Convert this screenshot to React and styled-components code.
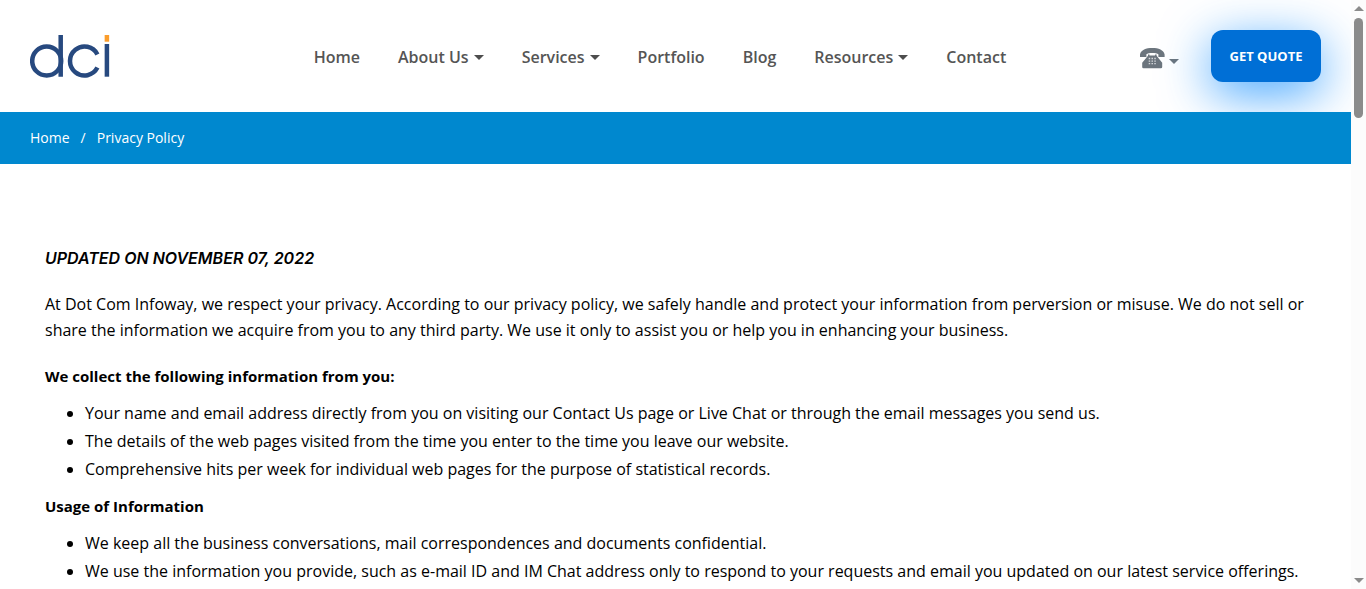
import React from 'react';
import styled, { createGlobalStyle } from 'styled-components';

const GlobalStyle = createGlobalStyle`
  *, *::before, *::after { box-sizing: border-box; }
  body {
    margin: 0;
    background: #fff;
    color: #000;
    font-family: "Open Sans", "Noto Sans", sans-serif;
    font-size: 16px;
    line-height: 26px;
  }
`;

const Page = styled.div`
  padding-right: 15px;
`;

const Header = styled.header`
  display: flex;
  align-items: center;
  justify-content: space-between;
  height: 112px;
  padding: 0 30px;
`;

const LogoLink = styled.a`
  display: block;
  svg { display: block; }
`;

const Nav = styled.nav`
  display: flex;
  align-items: center;
  gap: 38px;
  margin: 2px 0 0 70px;
`;

const NavLink = styled.a`
  display: flex;
  align-items: center;
  gap: 5px;
  color: #555;
  font-size: 16px;
  font-weight: 600;
  line-height: 24px;
  text-decoration: none;
  white-space: nowrap;
`;

const Caret = styled.span`
  border: 5px solid transparent;
  border-top-color: ${(p) => p.$color || '#4d4d4d'};
  border-bottom-width: 0;
`;

const Actions = styled.div`
  display: flex;
  align-items: center;
  gap: 32px;
`;

const PhoneButton = styled.button`
  display: flex;
  align-items: flex-end;
  gap: 4px;
  padding: 4px 0 0;
  border: 0;
  background: none;
  ${Caret} { margin-bottom: 5px; }
`;

const QuoteButton = styled.button`
  width: 110px;
  height: 52px;
  padding: 0;
  border: 0;
  border-radius: 12px;
  background: #006fd6;
  box-shadow: 0 12px 50px rgba(0, 133, 255, 0.75);
  color: #fff;
  font: 700 13px/20px "Open Sans", "Noto Sans", sans-serif;
`;

const Breadcrumb = styled.nav`
  position: relative;
  display: flex;
  align-items: center;
  gap: 11px;
  height: 52px;
  padding: 0 30px;
  background: #0088cf;
  color: #fff;
  font-size: 14px;
`;

const Crumb = styled.a`
  color: #fff;
  text-decoration: none;
`;

const Content = styled.main`
  padding: 81px 45px 0;
`;

const Updated = styled.p`
  margin: 0 0 20px;
  font-family: Inter, "Open Sans", sans-serif;
  font-style: italic;
  font-weight: 600;
`;

const Paragraph = styled.p`
  margin: 0 0 20px;
`;

const Heading = styled.h2`
  margin: 0 0 10px;
  font-size: 15px;
  font-weight: 700;
  line-height: 26px;
`;

const List = styled.ul`
  margin: 0 0 10px;
  padding-left: 40px;
  line-height: 28px;
  &:last-child { margin-bottom: 0; }
`;

const ScrollTrack = styled.div`
  position: fixed;
  top: 0;
  right: 0;
  bottom: 0;
  display: flex;
  flex-direction: column;
  align-items: center;
  width: 15px;
  padding: 6px 0;
  background: #fcfcfc;
`;

const ScrollArrow = styled.span`
  border: 5px solid transparent;
  ${(p) => (p.$up ? 'border-top-width: 0; border-bottom: 5px solid #8b8b8b;' : 'border-bottom-width: 0; border-top: 5px solid #8b8b8b; margin-top: auto;')}
`;

const ScrollThumb = styled.span`
  width: 9px;
  height: 100px;
  margin-top: 7px;
  border-radius: 5px;
  background: #8b8b8b;
`;

const navItems = [
  { label: 'Home' },
  { label: 'About Us', menu: true },
  { label: 'Services', menu: true },
  { label: 'Portfolio' },
  { label: 'Blog' },
  { label: 'Resources', menu: true },
  { label: 'Contact' },
];

const sections = [
  {
    title: 'We collect the following information from you:',
    items: [
      'Your name and email address directly from you on visiting our Contact Us page or Live Chat or through the email messages you send us.',
      'The details of the web pages visited from the time you enter to the time you leave our website.',
      'Comprehensive hits per week for individual web pages for the purpose of statistical records.',
    ],
  },
  {
    title: 'Usage of Information',
    items: [
      'We keep all the business conversations, mail correspondences and documents confidential.',
      'We use the information you provide, such as e-mail ID and IM Chat address only to respond to your requests and email you updated on our latest service offerings.',
    ],
  },
];

const Logo = () => (
  <svg width="80" height="44" viewBox="0 0 80 44" fill="none" stroke="#27497f" strokeWidth="4.5" aria-hidden="true">
    <circle cx="16.700" cy="27" r="14.500" />
    <path d="M30.700 1v41.700M67.400 20.400A14.500 14.500 0 1 0 67.400 33.600" />
    <path d="M76.900 10v32.700" />
    <path d="M76.900 1v6.700" stroke="#fb9d2b" />
  </svg>
);

const PhoneIcon = () => (
  <svg width="25" height="21" viewBox="0 0 25 21" aria-hidden="true">
    <path fill="#6c757d" d="M0 9V6.500C1 1.800 6 0 12.300 0S23.600 1.800 24.600 6.500V9h-6.200V6.300C16.500 4.500 8.200 4.500 6.400 6.300V9z" />
    <path fill="#6c757d" d="M8 6.500h1.500v1h5.600v-1h1.500v1.300l5.600 6.900V19q0 1.300-1.300 1.300H3.500Q2.200 20.300 2.200 19v-4.300L8 7.800z" />
    <path stroke="#d5d8da" strokeWidth="1.300" strokeDasharray="1.500 1.300" d="M8.700 10.500h7.200M8.700 13.100h7.200M8.700 15.700h7.200" />
  </svg>
);

export default function App() {
  return (
    <>
      <GlobalStyle />
      <Page>
        <Header>
          <LogoLink href="#" aria-label="dci"><Logo /></LogoLink>
          <Nav aria-label="Main">
            {navItems.map((item) => (
              <NavLink href="#" key={item.label}>
                {item.label}
                {item.menu && <Caret />}
              </NavLink>
            ))}
          </Nav>
          <Actions>
            <PhoneButton type="button" aria-label="Phone numbers">
              <PhoneIcon />
              <Caret $color="#6c757d" />
            </PhoneButton>
            <QuoteButton type="button">GET QUOTE</QuoteButton>
          </Actions>
        </Header>
        <Breadcrumb aria-label="Breadcrumb">
          <Crumb href="#">Home</Crumb>
          <span>/</span>
          <Crumb href="#">Privacy Policy</Crumb>
        </Breadcrumb>
        <Content>
          <Updated>UPDATED ON NOVEMBER 07, 2022</Updated>
          <Paragraph>
            At Dot Com Infoway, we respect your privacy. According to our privacy policy, we safely handle and protect your information from perversion or misuse. We do not sell or share the information we acquire from you to any third party. We use it only to assist you or help you in enhancing your business.
          </Paragraph>
          {sections.map((section) => (
            <React.Fragment key={section.title}>
              <Heading>{section.title}</Heading>
              <List>
                {section.items.map((text) => <li key={text}>{text}</li>)}
              </List>
            </React.Fragment>
          ))}
        </Content>
      </Page>
      <ScrollTrack aria-hidden="true">
        <ScrollArrow $up />
        <ScrollThumb />
        <ScrollArrow />
      </ScrollTrack>
    </>
  );
}
